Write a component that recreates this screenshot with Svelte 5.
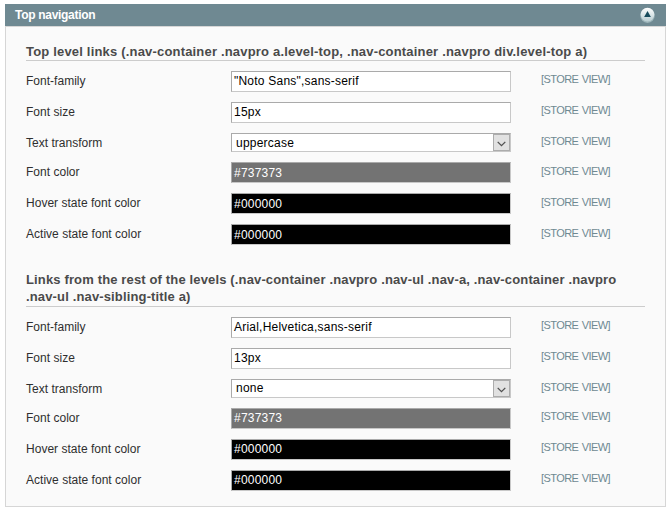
<script>
  const scope = '[STORE VIEW]';
  const groups = [
    {
      title: ['Top level links (.nav-container .navpro a.level-top, .nav-container .navpro div.level-top a)'],
      nudge: true,
      rows: [
        { label: 'Font-family', type: 'text', value: '"Noto Sans",sans-serif' },
        { label: 'Font size', type: 'text', value: '15px' },
        { label: 'Text transform', type: 'select', value: 'uppercase' },
        { label: 'Font color', type: 'color', value: '#737373' },
        { label: 'Hover state font color', type: 'color', value: '#000000' },
        { label: 'Active state font color', type: 'color', value: '#000000' }
      ]
    },
    {
      title: [
        'Links from the rest of the levels (.nav-container .navpro .nav-ul .nav-a, .nav-container .navpro',
        '.nav-ul .nav-sibling-title a)'
      ],
      nudge: false,
      rows: [
        { label: 'Font-family', type: 'text', value: 'Arial,Helvetica,sans-serif' },
        { label: 'Font size', type: 'text', value: '13px' },
        { label: 'Text transform', type: 'select', value: 'none' },
        { label: 'Font color', type: 'color', value: '#737373' },
        { label: 'Hover state font color', type: 'color', value: '#000000' },
        { label: 'Active state font color', type: 'color', value: '#000000' }
      ]
    }
  ];
</script>

<section class="panel">
  <header>
    <span>Top navigation</span>
    <svg class="toggle" width="16" height="16" viewBox="0 0 16 16">
      <defs>
        <linearGradient id="disc" x1="0" y1="0" x2="0" y2="1">
          <stop offset="0" stop-color="#ffffff" />
          <stop offset="1" stop-color="#b9cdd2" />
        </linearGradient>
      </defs>
      <circle cx="7.5" cy="8.6" r="7.3" fill="#9db5ba" />
      <circle cx="7.5" cy="7.6" r="6.8" fill="url(#disc)" />
      <path d="M7.5 4 L10.9 10 H4.1 Z" fill="#174b5c" />
    </svg>
  </header>
  <div class="body">
    {#each groups as group}
      <div class="group" class:nudge={group.nudge}>
        <h4 class:double={group.title.length > 1}>{#each group.title as line}<span>{line}</span>{/each}</h4>
        {#each group.rows as row}
          <div class="row" class:short={row.type === 'select'}>
            <span class="label">{row.label}</span>
            <div
              class="field {row.type}"
              style:background-color={row.type === 'color' ? row.value : null}
            >
              <span>{row.value}</span>
              {#if row.type === 'select'}
                <i class="arrow">
                  <svg width="9" height="6" viewBox="0 0 9 6">
                    <path d="M0.7 0.9 L4.5 4.7 L8.3 0.9" fill="none" stroke="#505050" stroke-width="1.3" />
                  </svg>
                </i>
              {/if}
            </div>
            <span class="scope" class:low={group.nudge && row.type === 'color'}>{scope}</span>
          </div>
        {/each}
      </div>
    {/each}
  </div>
</section>

<style>
  :global(body) {
    margin: 0;
    background: #fff;
  }
  .panel {
    width: 661px;
    padding: 4px 0 0 5px;
    font: 12px/16px 'Liberation Sans', Arial, sans-serif;
    color: #2f2f2f;
  }
  header {
    height: 22px;
    display: flex;
    justify-content: space-between;
    align-items: center;
    box-sizing: border-box;
    padding: 0 10px;
    background: #6f8992;
    color: #fff;
    font-weight: bold;
    letter-spacing: -0.3px;
  }
  .toggle {
    display: block;
  }
  .body {
    height: 481px;
    box-sizing: border-box;
    border: 1px solid #d6d6d6;
    background: #fafafa;
    padding: 16px 20px 0;
  }
  .group {
    margin-bottom: 17px;
  }
  h4 {
    margin: 0 0 10px;
    border-bottom: 1px solid #ccc;
    font-size: 13px;
    line-height: 17px;
    letter-spacing: 0.185px;
    color: #4a4a4a;
  }
  h4.double {
    margin-top: -1px;
    padding-bottom: 1px;
    letter-spacing: 0.145px;
  }
  h4 span {
    display: block;
    white-space: nowrap;
  }
  .row {
    display: flex;
    align-items: flex-start;
    height: 31px;
    white-space: nowrap;
  }
  .short {
    height: 29px;
  }
  .label {
    width: 205px;
    padding-top: 2px;
    letter-spacing: 0.02px;
  }
  .field {
    width: 280px;
    height: 21px;
    box-sizing: border-box;
    display: flex;
    justify-content: space-between;
    border: 1px solid;
    border-color: #aaa #c8c8c8 #c8c8c8 #aaa;
    background: #fff;
    color: #000;
    padding: 1px 0 0 2px;
    letter-spacing: 0.22px;
  }
  .field.color {
    color: #fff;
  }
  .nudge .field.color {
    padding-top: 2px;
  }
  .field.select {
    height: 19px;
    padding: 0 0 0 4px;
  }
  .nudge .field.select span {
    padding-top: 1px;
  }
  .arrow {
    width: 17px;
    height: 17px;
    box-sizing: border-box;
    border: 1px solid #acacac;
    background: #e1e1e1;
    display: flex;
    align-items: center;
    justify-content: center;
    padding-top: 2px;
  }
  .scope {
    margin-left: 30px;
    font-size: 11px;
    letter-spacing: -0.58px;
    word-spacing: 1px;
    color: #6f8992;
  }
  .low {
    padding-top: 1px;
  }
</style>
